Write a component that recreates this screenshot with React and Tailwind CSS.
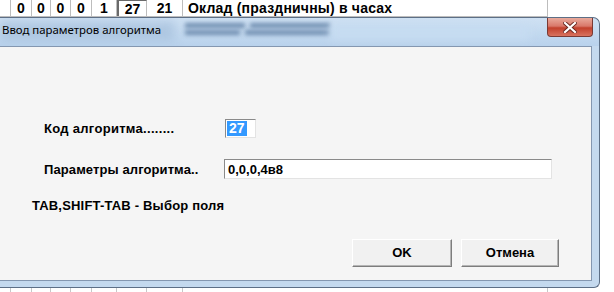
import React from 'react';

const cells = [
    { w: 'w-[11px]', text: '' },
    { w: 'w-[21px]', text: '0' },
    { w: 'w-[19px]', text: '0' },
    { w: 'w-[20px]', text: '0' },
    { w: 'w-[21px]', text: '0' },
    { w: 'w-[25px]', text: '1' },
    { w: 'w-[30px]', text: '27', active: true },
    { w: 'w-[36px]', text: '21' },
];

const TopRow = () => (
    <div className="flex h-[17px] w-[548px] border-r border-b border-[#bdbdbd] bg-white text-[14px] font-bold text-black leading-none">
        {cells.map((c, i) => (
            <div
                key={i}
                className={`${c.w} flex items-center justify-center border-r ${c.active ? 'border-l-2 border-t border-l-[#6a6a6a] border-t-[#6a6a6a] border-r-[#bdbdbd]' : 'border-[#bdbdbd]'}`}
            >
                {c.text}
            </div>
        ))}
        <div className="flex-1 flex items-center pl-[5px] tracking-[0.2px]">Оклад (праздничны) в часах</div>
    </div>
);

const BottomStrip = () => (
    <div className="flex h-[4px] w-[548px] bg-white">
        {cells.map((c, i) => (
            <div key={i} className={`${c.w} border-r border-[#c8c8c8]`} />
        ))}
        <div className="flex-1 border-r border-[#c8c8c8]" />
    </div>
);

const CloseButton = () => (
    <div className="w-[46px] h-[19px] rounded-b-[4px] border border-t-0 border-[#7a3a34] bg-[linear-gradient(to_bottom,#e9aa9c_0%,#d9786a_45%,#c2402c_55%,#d8735f_100%)] flex items-center justify-center">
        <svg width="14" height="11" viewBox="0 0 14 11">
            <path d="M2 1 L12 10 M12 1 L2 10" stroke="#6b2a22" strokeWidth="4" strokeLinecap="square" />
            <path d="M2 1 L12 10 M12 1 L2 10" stroke="#ffffff" strokeWidth="2.2" strokeLinecap="square" />
        </svg>
    </div>
);

const TitleBar = () => (
    <div className="relative h-[29px] overflow-hidden rounded-tr-[7px] border-t border-r border-[#5d6f86] bg-[linear-gradient(to_bottom,#cfe1f3,#b9d2ec)]">
        {/* blurred table rows behind the glass */}
        <div className="absolute left-[0px] top-[3px] w-[175px] h-[20px] bg-[#a6c0dc] blur-[5px] opacity-70" />
        <div className="absolute left-[185px] top-[5px] w-[60px] h-[5px] bg-[#6f8db0] blur-[2px]" />
        <div className="absolute left-[250px] top-[5px] w-[80px] h-[5px] bg-[#6f8db0] blur-[2px]" />
        <div className="absolute left-[185px] top-[12px] w-[55px] h-[5px] bg-[#6f8db0] blur-[2px]" />
        <div className="absolute left-[245px] top-[12px] w-[85px] h-[5px] bg-[#6f8db0] blur-[2px]" />
        <div className="absolute left-[330px] top-[8px] w-[200px] h-[14px] bg-[#c6dcf1] blur-[4px]" />
        <div className="relative flex items-start justify-between h-full">
            <span className="pl-[2px] pt-[6px] text-[11.4px] leading-none text-black font-['Noto_Sans',sans-serif]">
                Ввод параметров алгоритма
            </span>
            <div className="mr-[6px]">
                <CloseButton />
            </div>
        </div>
    </div>
);

const SunkenInput = ({ className, children }) => (
    <div className={`bg-white border border-t-[#8a8a8a] border-l-[#8a8a8a] border-b-[#e3e3e3] border-r-[#e3e3e3] flex items-center ${className}`}>
        {children}
    </div>
);

const Button = ({ className, children }) => (
    <button className={`h-[28px] bg-[#f1f1f1] border border-t-[#ffffff] border-l-[#ffffff] border-b-[#7d7d7d] border-r-[#7d7d7d] shadow-[inset_-1px_-1px_0_#b5b5b5] text-[13px] font-bold text-black flex items-center justify-center ${className}`}>
        {children}
    </button>
);

const Dialog = () => (
    <div className="w-[600px] h-[271px] flex flex-col">
        <TitleBar />
        <div className="flex-1 flex border-r border-b border-[#5d6f86] rounded-br-[6px] bg-[#c4d9ee]">
            <div className="flex-1 flex flex-col mr-[7px] mb-[6px] bg-[#f5f5f5] border-t border-r border-b border-[#8497b0] font-['Liberation_Sans',Arial,sans-serif] text-black">
                <div className="h-[72px]" />
                <div className="flex items-center pl-[44px] h-[19px]">
                    <span className="w-[181px] text-[13px] font-bold leading-none tracking-[0.3px]">Код алгоритма........</span>
                    <SunkenInput className="w-[31px] h-[19px] pl-[1px]">
                        <span className="bg-[#3399ff] text-white text-[14px] font-bold leading-[15px] px-[2px]">27</span>
                    </SunkenInput>
                </div>
                <div className="h-[21px]" />
                <div className="flex items-center pl-[44px] h-[20px]">
                    <span className="w-[180px] text-[13px] font-bold leading-none tracking-[0.1px]">Параметры алгоритма..</span>
                    <SunkenInput className="w-[328px] h-[20px] pl-[3px]">
                        <span className="text-[13px] font-bold leading-none">0,0,0,4в8</span>
                    </SunkenInput>
                </div>
                <div className="pl-[32px] pt-[20px] text-[13px] font-bold leading-none tracking-[0.2px]">
                    TAB,SHIFT-TAB - Выбор поля
                </div>
                <div className="flex justify-end gap-[9px] pr-[32px] pt-[27px]">
                    <Button className="w-[100px]">OK</Button>
                    <Button className="w-[98px]">Отмена</Button>
                </div>
            </div>
        </div>
    </div>
);

export default function App() {
    return (
        <div className="w-[614px] h-[292px] overflow-hidden bg-white font-['Liberation_Sans',Arial,sans-serif]">
            <TopRow />
            <Dialog />
            <BottomStrip />
        </div>
    );
}
